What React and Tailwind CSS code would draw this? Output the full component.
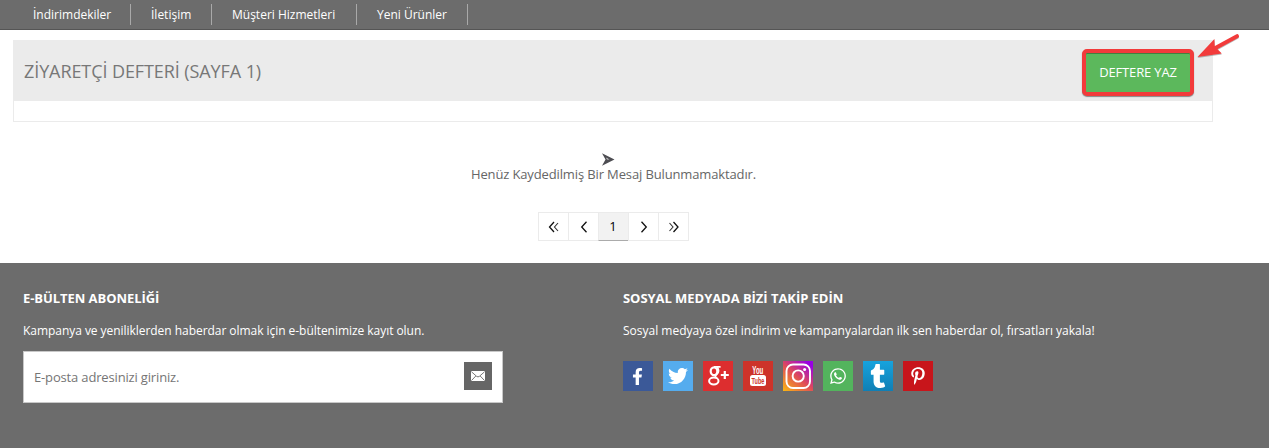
import { FaFacebookF, FaTwitter, FaWhatsapp, FaTumblr, FaPinterestP } from "react-icons/fa";

function NavItem({ children, width }) {
  return (
    <li className={`${width} h-[21px] shrink-0 border-r border-[#a9a9a9] pl-5 text-[12px] leading-[21px] whitespace-nowrap`}>
      {children}
    </li>
  );
}

function PageLink({ children, active }) {
  return (
    <li
      className={
        active
          ? "-ml-px flex h-[29px] w-[31px] items-center justify-center border border-[#ebebeb] border-b-[#ababab] bg-[#f2f2f2] pt-px text-[13px] text-black"
          : "-ml-px flex h-[29px] w-[31px] items-center justify-center border border-[#ebebeb] bg-white text-black"
      }
    >
      {children}
    </li>
  );
}

function Chevron({ d, d2 }) {
  return (
    <svg className="ml-px" width="14" height="14" viewBox="0 0 14 14" fill="none" stroke="#111" strokeWidth="1.3">
      <path d={d} />
      {d2 && <path d={d2} strokeWidth="1.1" stroke="#333" />}
    </svg>
  );
}

function GooglePlus() {
  return (
    <svg width="30" height="30" viewBox="0 0 30 30" fill="none" stroke="#fff">
      <ellipse cx="11" cy="10.2" rx="3.3" ry="3.9" strokeWidth="2.2" />
      <path d="M11 5.9h6.6M14 6.4c2 1.4 2.4 5-.4 7.1-2.1 1.6-1.5 2.4.4 3.6" strokeWidth="1.7" />
      <ellipse cx="10.8" cy="20" rx="4.7" ry="3.4" strokeWidth="2" />
      <path d="M21.8 10v8M17.8 14h8" strokeWidth="2.2" />
    </svg>
  );
}

function YouTube() {
  return (
    <svg width="30" height="30" viewBox="0 0 30 30" fontFamily="Liberation Sans, sans-serif" fontWeight="700">
      <text x="9.3" y="13" fontSize="10" textLength="11" lengthAdjust="spacingAndGlyphs" fill="#fff">You</text>
      <rect x="7" y="14" width="16" height="11" rx="2.5" fill="#fff" />
      <text x="8.6" y="23" fontSize="9.5" textLength="12.8" lengthAdjust="spacingAndGlyphs" fill="#cd332a">Tube</text>
    </svg>
  );
}

function Instagram() {
  return (
    <svg width="30" height="30" viewBox="0 0 30 30" fill="none" stroke="#fff" strokeWidth="1.9">
      <rect x="3.5" y="3.5" width="23.5" height="23.5" rx="6.5" />
      <circle cx="15.2" cy="15" r="5.6" />
      <circle cx="21.6" cy="8.6" r="1.5" fill="#fff" stroke="none" />
    </svg>
  );
}

function Social({ bg, children }) {
  return <li className={`${bg} flex h-[30px] w-[30px] items-center justify-center text-white`}>{children}</li>;
}

export default function App() {
  return (
    <div className="h-[448px] overflow-hidden bg-white font-['Open_Sans',sans-serif]">
      <nav className="h-[30px] border-b border-[#555] bg-[#6c6c6c] pt-1 pl-[13px] text-white">
        <ul className="flex">
          <NavItem width="w-[118px]">İndirimdekiler</NavItem>
          <NavItem width="w-[81px]">İletişim</NavItem>
          <NavItem width="w-[145px]">Müşteri Hizmetleri</NavItem>
          <NavItem width="w-[111px]">Yeni Ürünler</NavItem>
        </ul>
      </nav>

      <main className="h-[233px] pt-[10px] pl-[13px]">
        <section className="h-[82px] w-[1200px] border border-[#ebebeb]">
          <header className="flex h-[60px] items-center justify-between bg-[#ebebeb] pr-[18px] pl-[10px]">
            <h1 className="text-[18px] tracking-[-0.09px] text-[#777]">ZİYARETÇİ DEFTERİ (SAYFA 1)</h1>
            <div className="relative mt-[2px]">
              <button className="flex h-[47px] w-[112px] items-center justify-center rounded-[5px] border-4 border-[#f23b3b] bg-[#5cb85c] pt-px text-[13px] whitespace-nowrap text-white shadow-[0_1px_1px_#888,inset_0_1px_0_#43803f]">
                <span className="tracking-[-0.15px]">DEFTERE YAZ</span>
              </button>
              <svg className="absolute -top-4 left-[115px]" width="44" height="26" viewBox="0 0 44 26">
                <g transform="translate(0 .9)" opacity=".45">
                  <path d="M.5 24 17.4 6l.4 7.5 7 7Z" fill="#666" />
                  <path d="M17 15.8 40 3.2" stroke="#666" strokeWidth="4" strokeLinecap="round" />
                </g>
                <path d="M.5 24 17.4 6l.4 7.5 7 7Z" fill="#f23b3b" />
                <path d="M17 15.8 40 3.2" stroke="#f23b3b" strokeWidth="4" strokeLinecap="round" />
              </svg>
            </div>
          </header>
        </section>

        <div className="flex w-[1200px] flex-col items-center">
          <svg className="mt-[30px] mr-[11px]" width="14" height="15" viewBox="0 0 14 15">
            <path d="M1 1.2 13.5 7.5 1 13.8 4.5 7.5Z" fill="#4d4d52" />
            <path d="m5 5.4 3.5 2.1H6Z" fill="#ddd" />
          </svg>
          <p className="-mt-[2px] ml-px text-[13px] leading-[18px] tracking-[-0.13px] whitespace-nowrap text-[#666]">
            Henüz Kaydedilmiş Bir Mesaj Bulunmamaktadır.
          </p>
          <ul className="mt-[29px] ml-px flex">
            <PageLink><Chevron d="M7 2 2.5 7 7 12" d2="M11 3 7.5 7l3.5 4" /></PageLink>
            <PageLink><Chevron d="M9.5 1.7 4.7 7l4.8 5.3" /></PageLink>
            <PageLink active>1</PageLink>
            <PageLink><Chevron d="M4.5 1.7 9.3 7l-4.8 5.3" /></PageLink>
            <PageLink><Chevron d="M6.5 2 11 7l-4.5 5" d2="M2.5 3 6 7l-3.5 4" /></PageLink>
          </ul>
        </div>
      </main>

      <footer className="flex h-[185px] bg-[#6c6c6c] pl-[23px] text-white">
        <section className="w-[600px] pt-[26px]">
          <h2 className="text-[13px] leading-[18px] font-bold tracking-[-0.06px] whitespace-nowrap">E-BÜLTEN ABONELİĞİ</h2>
          <p className="mt-[15px] text-[12px] leading-[18px] tracking-[-0.045px] whitespace-nowrap">
            Kampanya ve yeniliklerden haberdar olmak için e-bültenimize kayıt olun.
          </p>
          <form className="mt-[11px] flex h-[52px] w-[480px] items-center border border-[#c8c8c8] bg-white pr-[10px] pl-[10px]">
            <input className="mt-[2px] min-w-0 flex-1 text-[13px] tracking-[-0.16px] text-[#666] outline-none placeholder:text-[#757575]" placeholder="E-posta adresinizi giriniz." />
            <button type="button" className="mb-[2px] flex h-7 w-7 items-center justify-center bg-[#666]">
              <svg width="14" height="10" viewBox="0 0 14 10">
                <rect width="14" height="10" rx=".8" fill="#fff" />
                <path d="m.5.8 5.2 4.6q1.3 1 2.6 0L13.5.8M.5 9.5 4.8 5M13.5 9.5 9.2 5" fill="none" stroke="#777" />
              </svg>
            </button>
          </form>
        </section>

        <section className="pt-[26px]">
          <h2 className="text-[13px] leading-[18px] font-bold tracking-[-0.05px] whitespace-nowrap">SOSYAL MEDYADA BİZİ TAKİP EDİN</h2>
          <p className="mt-[15px] text-[12px] leading-[18px] whitespace-nowrap">
            Sosyal medyaya özel indirim ve kampanyalardan ilk sen haberdar ol, fırsatları yakala!
          </p>
          <ul className="mt-[21px] flex gap-[10px]">
            <Social bg="bg-[#3b5998]"><FaFacebookF size={17} className="mr-px" /></Social>
            <Social bg="bg-[#55acee]"><FaTwitter size={20} /></Social>
            <Social bg="bg-[#dd2e2f]"><GooglePlus /></Social>
            <Social bg="bg-[#cd332a]"><YouTube /></Social>
            <Social bg="bg-[linear-gradient(40deg,#fbb811_0%,#df4c58_48%,#9800e5_90%)]"><Instagram /></Social>
            <Social bg="bg-[#53b45d]"><FaWhatsapp size={18} /></Social>
            <Social bg="bg-[linear-gradient(#17a3dd,#107fb5)]"><FaTumblr size={24} /></Social>
            <Social bg="bg-[#c8151b]"><FaPinterestP size={18} /></Social>
          </ul>
        </section>
      </footer>
    </div>
  );
}
